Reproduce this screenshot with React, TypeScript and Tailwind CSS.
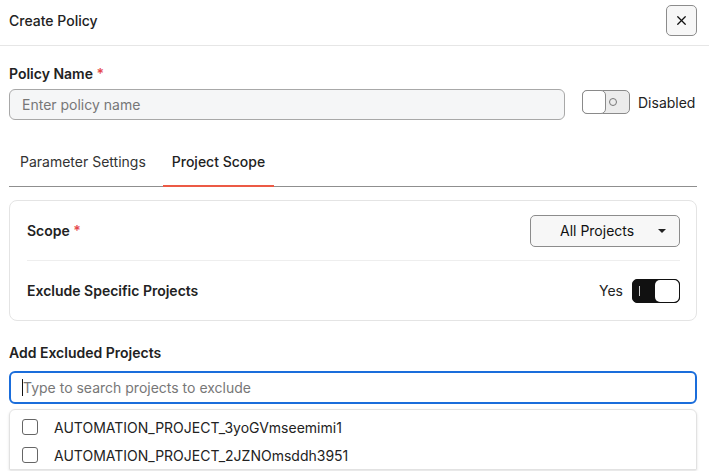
import { X } from 'lucide-react'

function Toggle({ on }: { on: boolean }) {
  if (on) {
    return (
      <div className="relative h-[24px] w-[48px] rounded-[5px] border border-[#111111] bg-[#111111]">
        <span className="absolute left-[6px] top-[6px] h-[10px] w-px bg-[#cfcfcf]" />
        <span className="absolute right-0 top-0 h-[22px] w-[24px] rounded-[5px] bg-white" />
      </div>
    )
  }
  return (
    <div className="relative h-[24px] w-[48px] rounded-[5px] border border-[#8a8a8a] bg-[#ececec]">
      <span className="absolute left-[-1px] top-[-1px] h-[24px] w-[24px] rounded-[5px] border border-[#8a8a8a] bg-white" />
      <span className="absolute right-[12px] top-[7px] h-[8px] w-[8px] rounded-full border border-[#777]" />
    </div>
  )
}

const projects = ['AUTOMATION_PROJECT_3yoGVmseemimi1', 'AUTOMATION_PROJECT_2JZNOmsddh3951']

export default function App() {
  return (
    <div
      className="h-[471px] w-[709px] overflow-hidden bg-white text-[14px] text-[#1f2328]"
      style={{ fontFamily: 'Inter, "Liberation Sans", sans-serif' }}
    >
      <div className="flex h-[46px] items-center justify-between border-b border-[#e6e6e6] pb-[5px] pl-[9px] pr-[12px]">
        <h2 className="font-medium text-[#222]">Create Policy</h2>
        <button className="flex h-[31px] w-[31px] items-center justify-center rounded-[5px] border border-[#8c8c8c] bg-[#f7f7f7]">
          <X size={15} strokeWidth={2} className="text-[#111]" />
        </button>
      </div>

      <div className="pl-[9px] pr-[12px]">
        <div className="mt-[17px] font-semibold text-[#222]">
          Policy Name <span className="text-[#e5484d]">*</span>
        </div>
        <div className="mt-[5px] flex items-start">
          <input
            className="h-[31px] w-[556px] rounded-[6px] border border-[#a8a8a8] bg-[#f5f6f7] px-[12px] text-[14px] placeholder:text-[#777]"
            placeholder="Enter policy name"
          />
          <div className="ml-[17px] mt-[1px] flex items-center gap-[8px]">
            <Toggle on={false} />
            <span className="text-[#222]">Disabled</span>
          </div>
        </div>

        <div className="mt-[23px] flex gap-[8px] border-b border-[#8f8f8f]">
          <div className="pb-[14px] pl-[11px] pr-[9px] pt-[8px] text-[#333]">Parameter Settings</div>
          <div className="relative px-[9px] pb-[14px] pt-[8px] font-medium text-[#222]">
            Project Scope
            <span className="absolute bottom-[-1px] left-0 right-0 h-[2px] bg-[#ec5a45]" />
          </div>
        </div>

        <div className="mt-[13px] rounded-[8px] border border-[#e4e4e4] pl-[17px] pr-[16px]">
          <div className="flex h-[60px] items-center justify-between border-b border-[#eeeeee]">
            <span className="font-semibold text-[#222]">
              Scope <span className="text-[#e5484d]">*</span>
            </span>
            <button className="flex h-[32px] w-[150px] items-center justify-between rounded-[5px] border border-[#8c8c8c] bg-[#f7f7f7] pl-[29px] pr-[13px] text-[#111]">
              <span>All Projects</span>
              <svg width="8" height="4" viewBox="0 0 8 4">
                <path d="M0 0h8L4 4z" fill="#222" />
              </svg>
            </button>
          </div>
          <div className="flex h-[59px] items-center justify-between">
            <span className="font-semibold text-[#222]">Exclude Specific Projects</span>
            <div className="flex items-center gap-[9px]">
              <span className="text-[#222]">Yes</span>
              <Toggle on />
            </div>
          </div>
        </div>

        <div className="mt-[21px] font-semibold text-[#222]">Add Excluded Projects</div>
        <div className="relative mt-[8px]">
          <input
            className="h-[33px] w-full rounded-[6px] border-2 border-[#1a6ddb] px-[12px] text-[14px] outline-none placeholder:text-[#777]"
            placeholder="Type to search projects to exclude"
          />
          <span className="absolute left-[13px] top-[8px] h-[17px] w-px bg-[#111]" />
        </div>
        <div className="mt-[5px] rounded-t-[6px] border border-[#e2e2e2] pt-[3px] shadow-sm">
          {projects.map((p) => (
            <label key={p} className="flex h-[28px] items-center gap-[16px] px-[12px] text-[#222]">
              <span className="h-[16px] w-[16px] rounded-[3px] border border-[#666]" />
              {p}
            </label>
          ))}
        </div>
      </div>
    </div>
  )
}
